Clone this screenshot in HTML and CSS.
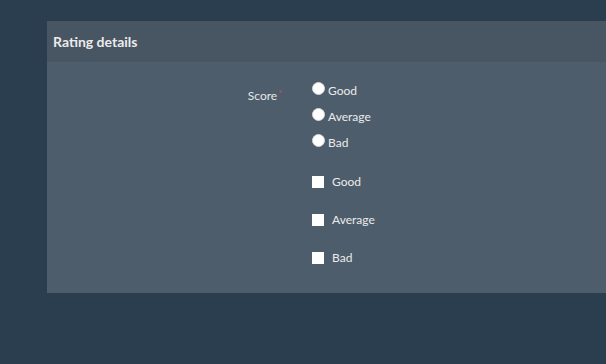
FILE: index.html
```html
<!DOCTYPE html>
<html lang="en">
<head>
<meta charset="utf-8">
<title>Rating details</title>
<link rel="stylesheet" href="styles.css">
</head>
<body>
<div class="panel">
  <div class="panel-heading">Rating details</div>
  <div class="panel-body">
    <div class="form-row">
      <div class="field-label">Score<span class="req">*</span></div>
      <div class="controls">
        <label class="radio-row"><input type="radio" name="score" class="radio"><span class="opt">Good</span></label>
        <label class="radio-row"><input type="radio" name="score" class="radio"><span class="opt">Average</span></label>
        <label class="radio-row"><input type="radio" name="score" class="radio"><span class="opt">Bad</span></label>
        <div class="check-group">
          <label class="check-row"><input type="checkbox" class="check"><span class="opt">Good</span></label>
          <label class="check-row"><input type="checkbox" class="check"><span class="opt">Average</span></label>
          <label class="check-row"><input type="checkbox" class="check"><span class="opt">Bad</span></label>
        </div>
      </div>
    </div>
  </div>
</div>
</body>
</html>
```
FILE: styles.css
```css
html, body {
  margin: 0;
  padding: 0;
  background: #2b3e50;
  height: 100%;
  overflow: hidden;
}
body {
  font-family: Lato, "Liberation Sans", sans-serif;
  color: #ebebeb;
  font-size: 12px;
}
.panel {
  margin: 21px 0 0 47px;
  background: #4e5d6c;
}
.panel-heading {
  height: 41px;
  display: flex;
  align-items: center;
  padding: 0 6px;
  background: #485563;
  font-weight: 700;
  font-size: 14px;
  color: #ebebeb;
}
.panel-body {
  padding: 13px 0 16px;
}
.form-row {
  display: flex;
  gap: 30px;
}
.field-label {
  width: 235px;
  text-align: right;
  padding-top: 12px;
  line-height: 14px;
  color: #e6e6e6;
}
.req {
  color: #c0505a;
  font-size: 9px;
  vertical-align: 3px;
  margin-left: 1px;
}
.controls {
  display: flex;
  flex-direction: column;
}
.radio-row {
  height: 26px;
  display: flex;
  align-items: center;
  gap: 3px;
}
.radio-row .opt {
  margin-top: 6px;
}
.radio {
  appearance: none;
  -webkit-appearance: none;
  margin: 0;
  width: 13px;
  height: 13px;
  border-radius: 50%;
  background: #fff;
  border: 1px solid #d8d8d8;
  box-sizing: border-box;
}
.check-group {
  margin-top: 10px;
  display: flex;
  flex-direction: column;
}
.check-row {
  height: 38px;
  display: flex;
  align-items: center;
  gap: 8px;
}
.check {
  appearance: none;
  -webkit-appearance: none;
  margin: 0;
  width: 12px;
  height: 12px;
  background: #fff;
  border: 0;
}
.opt {
  line-height: 14px;
}
```
